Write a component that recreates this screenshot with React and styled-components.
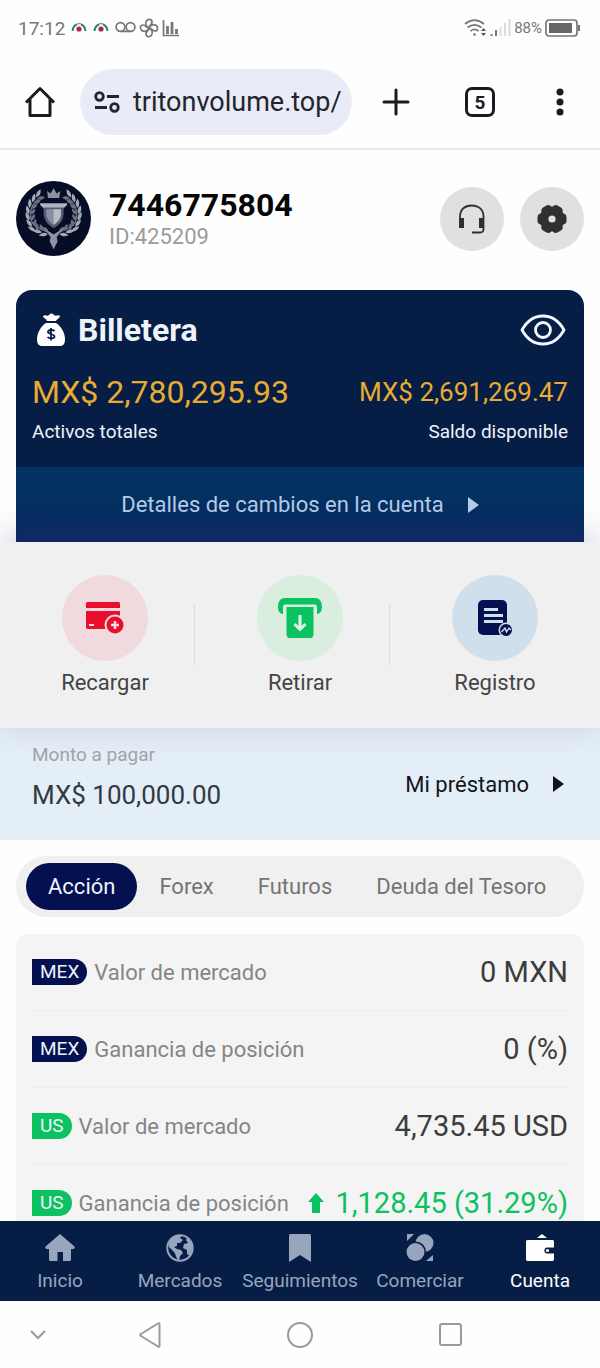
import React, { useState } from "react";
import styled, { createGlobalStyle } from "styled-components";

const GlobalStyle = createGlobalStyle`
  * {
    box-sizing: border-box;
  }
  body {
    margin: 0;
    background: #fefefe;
    font-family: Roboto, "Liberation Sans", sans-serif;
    color: #333;
  }
  button, input {
    margin: 0;
    padding: 0;
    border: none;
    background: none;
    font: inherit;
    color: inherit;
  }
  button {
    cursor: pointer;
  }
  a {
    color: inherit;
    text-decoration: none;
  }
  svg {
    display: block;
    flex-shrink: 0;
  }
`;

const laurel = [
  [12, 56, 40], [9, 50, 20], [7, 43, 5], [7, 36, -5], [9, 29, -18],
  [13, 23, -32], [18, 18, -45], [18, 58, 60], [24, 61, 80],
];

const Emblem = () => (
  <svg width="75" height="75" viewBox="0 0 75 75" aria-hidden="true">
    <circle cx="37.5" cy="37.5" r="37.5" fill="#060d27" />
    <g transform="translate(5 3) scale(.87)">
      {[false, true].map((flip) => (
        <g key={String(flip)} transform={flip ? "translate(75 0) scale(-1 1)" : undefined}>
          <path d="M20 17C8 27 8 44 19 50C26 54 32 54 37 59" fill="none" stroke="#6c7386" strokeWidth="1.500" />
          {laurel.map(([x, y, angle]) => (
            <g key={angle} transform={`translate(${x + 3} ${y - 5}) rotate(${angle * -1})`}>
              <path d="M-1 4C-5 1 -5 -3 -4 -6C0 -3 1 0 -1 4Z" fill="#a4a8b5" />
              <path d="M1 4C1 0 3 -2 6 -3C7 0 5 4 1 4Z" fill="#6a7185" />
            </g>
          ))}
        </g>
      ))}
      <path d="M31 16L30 8L34 11L37.500 5L41 11L45 8L44 16Z" fill="#8d92a1" />
      <path d="M22 22H53V24L49 28H26L22 24Z" fill="#aeb2bd" />
      <path d="M26 27H49V33C49 42 44 47 37.500 51C31 47 26 42 26 33Z" fill="#555c70" />
      <path d="M29 29H46V34C46 40 42 44 37.500 47C33 44 29 40 29 34Z" fill="#8a8f9d" />
      <path d="M37.500 29H46V34C46 40 42 44 37.500 47Z" fill="#b9bcc6" />
      <path d="M26 51L37.500 58L49 51L41 61L42 66L37.500 75L33 66L34 61Z" fill="#8d93a5" />
    </g>
  </svg>
);

const NotifyIcon = () => (
  <svg width="16" height="12" viewBox="0 0 16 12" fill="none" aria-hidden="true">
    <path d="M1.500 9C2 5 4 3 6 2.500" stroke="#2d8068" strokeWidth="2" />
    <path d="M6 2C7.500 1.500 9 1.500 10 2" stroke="#999" strokeWidth="1.500" />
    <path d="M10 2.500C12 3 14 5 14.500 9" stroke="#2d8068" strokeWidth="2" />
    <circle cx="8" cy="7" r="2.600" fill="#a52a4c" />
  </svg>
);

const VoicemailIcon = () => (
  <svg width="21" height="14" viewBox="0 0 21 14" fill="none" stroke="#777" strokeWidth="1.700" aria-hidden="true">
    <circle cx="5.500" cy="6" r="4.400" />
    <circle cx="15.500" cy="6" r="4.400" />
    <path d="M5.500 10.400H15.500" />
  </svg>
);

const FanIcon = () => (
  <svg width="20" height="20" viewBox="0 0 20 20" fill="none" stroke="#777" strokeWidth="1.700" aria-hidden="true">
    {[0, 90, 180, 270].map((angle) => (
      <path key={angle} transform={`rotate(${angle} 10 10)`} d="M10 10C6.500 8.500 6 5 7.500 2.800C9 .6 13 1 13 4C13 6.500 10.500 7 10 10Z" />
    ))}
  </svg>
);

const ChartIcon = () => (
  <svg width="18" height="18" viewBox="0 0 18 18" fill="none" stroke="#777" aria-hidden="true">
    <path d="M1.500 1V16.500H17" strokeWidth="1.700" />
    <path d="M5.500 7V15M10 3V15M14.500 10V15" strokeWidth="2.800" />
  </svg>
);

const WifiIcon = () => (
  <svg width="23" height="18" viewBox="0 0 23 18" fill="none" stroke="#777" strokeWidth="1.700" aria-hidden="true">
    <path d="M1 5C7 0 14 0 20 5M3.500 8.500C8 5 13 5 17.500 8.500M6.500 12C9 10 12 10 14.500 12" />
    <circle cx="10.500" cy="15.500" r="1.300" fill="#777" stroke="none" />
    <path d="M19.500 9L22 12H17ZM19.500 17L22 14H17Z" fill="#555" stroke="none" />
  </svg>
);

const SignalIcon = () => (
  <svg width="21" height="18" viewBox="0 0 21 18" fill="none" strokeWidth="2" aria-hidden="true">
    <path d="M1.500 15V17M6 11V17" stroke="#777" />
    <path d="M10.500 8V17M15 4V17M19.500 0V17" stroke="#dcdcdc" />
  </svg>
);

const BatteryIcon = () => (
  <svg width="35" height="18" viewBox="0 0 35 18" aria-hidden="true">
    <rect x="1" y="1" width="31" height="16" rx="3" fill="none" stroke="#777" strokeWidth="1.700" />
    <rect x="4" y="4" width="23" height="10" fill="#666" />
    <path d="M33 6H35V12H33Z" fill="#777" />
  </svg>
);

const BrowserHomeIcon = () => (
  <svg width="32" height="32" viewBox="0 0 32 32" fill="none" stroke="#1c1c1e" strokeWidth="3" aria-hidden="true">
    <path d="M2 16.500L16 2.500L30 16.500M6 13.500V29.500H26V13.500" strokeLinejoin="round" />
  </svg>
);

const TuneIcon = () => (
  <svg width="26" height="24" viewBox="0 0 26 24" fill="none" stroke="#23252e" strokeWidth="2.800" aria-hidden="true">
    <circle cx="5.500" cy="6.500" r="3.800" />
    <path d="M13 6.500H25M1 17.500H13" />
    <circle cx="20.500" cy="17.500" r="3.800" />
  </svg>
);

const PlusIcon = () => (
  <svg width="28" height="28" viewBox="0 0 28 28" fill="none" stroke="#1c1c1e" strokeWidth="3" strokeLinecap="round" aria-hidden="true">
    <path d="M14 2V26M2 14H26" />
  </svg>
);

const DotsIcon = () => (
  <svg width="8" height="28" viewBox="0 0 8 28" fill="#1c1c1e" aria-hidden="true">
    <circle cx="4" cy="4" r="3.500" />
    <circle cx="4" cy="14" r="3.500" />
    <circle cx="4" cy="24" r="3.500" />
  </svg>
);

const HeadsetIcon = () => (
  <svg width="28" height="32" viewBox="0 0 28 32" fill="none" stroke="#303030" strokeWidth="1.800" aria-hidden="true">
    <path d="M2 16V14C2 6 7 2.500 13.500 2.500C20 2.500 25.500 6 25.500 14V26C25.500 28.500 24.500 29.500 22 29.500H14" />
    <path d="M1 15H6V25H1ZM21 15H26V25H21Z" fill="#303030" stroke="none" />
  </svg>
);

const GearIcon = () => (
  <svg width="30" height="30" viewBox="0 0 30 30" fill="#303030" aria-hidden="true">
    <circle cx="15" cy="15" r="12.600" />
    {[0, 60, 120, 180, 240, 300].map((angle) => (
      <rect key={angle} x="19" y="9.500" width="10.500" height="11" rx="4" transform={`rotate(${angle} 15 15)`} />
    ))}
    <circle cx="15" cy="15" r="3.600" fill="#e0e0e0" />
  </svg>
);

const MoneyBagIcon = () => (
  <svg width="30" height="34" viewBox="0 0 30 34" fill="#fff" aria-hidden="true">
    <path d="M7 3C9 1 11 4 13 2C15 0 16 0 18 2C20 4 22 1 24 3C24 5 21 6 20 8H11C10 5 7 5 7 3Z" />
    <path d="M10 10H20C25 13 29 20 29 26C29 31 27 33 24 33H6C3 33 1 31 1 26C1 20 5 13 10 10Z" />
    <path d="M18.500 18C17 16.500 12 16.500 12 19C12 21.500 18.500 20.500 18.500 23.500C18.500 26 13 26 11.500 24M15 15V27.500" fill="none" stroke="#061e45" strokeWidth="1.800" />
  </svg>
);

const EyeIcon = () => (
  <svg width="46" height="32" viewBox="0 0 46 32" fill="none" stroke="#f2f8ff" strokeWidth="2.800" aria-hidden="true">
    <path d="M2 16C7 7 14 2 23 2C32 2 39 7 44 16C39 25 32 30 23 30C14 30 7 25 2 16Z" strokeLinejoin="round" />
    <circle cx="23" cy="16" r="7.500" />
  </svg>
);

const CaretIcon = () => (
  <svg width="11" height="16" viewBox="0 0 11 16" fill="currentColor" aria-hidden="true">
    <path d="M0 0L11 8L0 16Z" />
  </svg>
);

const RechargeIcon = () => (
  <svg width="40" height="34" viewBox="0 0 40 34" aria-hidden="true">
    <path d="M3 1H33C34.500 1 35 1.500 35 3V7H1V3C1 1.500 1.500 1 3 1ZM1 10H35V28H3C1.500 28 1 27.500 1 26Z" fill="#e90f2c" />
    <path d="M4 24H9" stroke="#f8dde0" strokeWidth="2" />
    <circle cx="30" cy="24" r="10.500" fill="#f0dadd" />
    <circle cx="30" cy="24" r="8.500" fill="#e90f2c" />
    <path d="M30 20V28M26 24H34" stroke="#f8dde0" strokeWidth="2.600" />
  </svg>
);

const WithdrawIcon = () => (
  <svg width="44" height="40" viewBox="0 0 44 40" aria-hidden="true">
    <path d="M7 0H37C42 0 44 4 44 9C44 13 42 16 39 16V9C39 7 38 6.500 36 6.500H8C6 6.500 5 7 5 9V16C2 16 0 13 0 9C0 4 2 0 7 0Z" fill="#0ac25f" />
    <path d="M8.500 9H35.500V36C35.500 38.500 34.500 40 32 40H12C9.500 40 8.500 38.500 8.500 36Z" fill="#0ac25f" />
    <path d="M22 17V31M16.500 26L22 31.500L27.500 26" fill="none" stroke="#dff5e7" strokeWidth="3" />
  </svg>
);

const RecordIcon = () => (
  <svg width="36" height="38" viewBox="0 0 36 38" aria-hidden="true">
    <rect x="1" y="1" width="29" height="35" rx="5" fill="#04104f" />
    <path d="M7 10.500H21M7 16.500H26M7 22.500H26" stroke="#cfdfeb" strokeWidth="2.800" />
    <circle cx="29" cy="31" r="7.500" fill="#cfdfeb" />
    <circle cx="29" cy="31" r="6" fill="#04104f" />
    <path d="M24.500 33L28 29L29.500 33L32 29L34 31" fill="none" stroke="#cfdfeb" strokeWidth="1.400" />
  </svg>
);

const ArrowUpIcon = () => (
  <svg width="16" height="20" viewBox="0 0 16 20" fill="currentColor" aria-hidden="true">
    <path d="M8 0L16 9H12V20H4V9H0Z" />
  </svg>
);

const HomeIcon = () => (
  <svg width="30" height="28" viewBox="0 0 30 28" fill="currentColor" aria-hidden="true">
    <path d="M15 0L30 13L29 15H26V25C26 26.500 25.500 27 24 27H18V18H12.500V27H6C4.500 27 4 26.500 4 25V15H1L0 13Z" />
  </svg>
);

const GlobeIcon = () => (
  <svg width="28" height="28" viewBox="0 0 28 28" aria-hidden="true">
    <circle cx="14" cy="14" r="12.700" fill="none" stroke="currentColor" strokeWidth="2" />
    <path d="M6 4C9 1 13 0 16 1L14 4L17 6L14 9L11 9V12L8 13L11 15L15 16L17 19L14 22L13 27C10 25 10 20 8 18L3 13C2 10 4 7 6 4ZM21 4C25 7 27 11 26 16L24 22L21 20V16L17 14L18 10L22 9L20 6Z" fill="currentColor" />
  </svg>
);

const BookmarkIcon = () => (
  <svg width="24" height="28" viewBox="0 0 24 28" fill="currentColor" aria-hidden="true">
    <path d="M3 0H21C22.500 0 23 .5 23 2V28L12 21L1 28V2C1 .5 1.500 0 3 0Z" />
  </svg>
);

const TradeIcon = () => (
  <svg width="28" height="28" viewBox="0 0 28 28" fill="currentColor" aria-hidden="true">
    <circle cx="18.500" cy="9" r="9" />
    <circle cx="9.500" cy="18" r="10.500" fill="#061e45" />
    <circle cx="9.500" cy="18" r="9" />
    <path d="M1 0H8L1 7ZM27 21V27H20Z" />
  </svg>
);

const WalletIcon = () => (
  <svg width="30" height="28" viewBox="0 0 30 28" aria-hidden="true">
    <path d="M12 4L17 0L22 4Z" fill="currentColor" />
    <path d="M3 6H27C28.500 6 29 6.500 29 8V13.500H22C18.500 13.500 18.500 19.500 22 19.500H29V25C29 26.500 28.500 27 27 27H3C1.500 27 1 26.500 1 25V8C1 6.500 1.500 6 3 6Z" fill="currentColor" />
    <circle cx="22.500" cy="16.500" r="1.600" fill="currentColor" />
  </svg>
);

const actions = [
  { label: "Recargar", tint: "#f0dadd", icon: <RechargeIcon /> },
  { label: "Retirar", tint: "#daeee0", icon: <WithdrawIcon /> },
  { label: "Registro", tint: "#cfdfeb", icon: <RecordIcon /> },
];

const tabs = ["Acción", "Forex", "Futuros", "Deuda del Tesoro"];

const positions = [
  { market: "MEX", label: "Valor de mercado", value: "0 MXN" },
  { market: "MEX", label: "Ganancia de posición", value: "0 (%)" },
  { market: "US", label: "Valor de mercado", value: "4,735.45 USD" },
  { market: "US", label: "Ganancia de posición", value: "1,128.45 (31.29%)", up: true },
];

const navItems = [
  { label: "Inicio", icon: <HomeIcon /> },
  { label: "Mercados", icon: <GlobeIcon /> },
  { label: "Seguimientos", icon: <BookmarkIcon /> },
  { label: "Comerciar", icon: <TradeIcon /> },
  { label: "Cuenta", icon: <WalletIcon />, active: true },
];

const App = () => {
  const [activeTab, setActiveTab] = useState("Acción");

  return (
    <Screen>
      <GlobalStyle />
      <StatusBar>
        <StatusGroup>
          <Clock>17:12</Clock>
          <NotifyIcon />
          <NotifyIcon />
          <StatusGroup $tight>
            <VoicemailIcon />
            <FanIcon />
            <ChartIcon />
          </StatusGroup>
        </StatusGroup>
        <StatusGroup $tight>
          <WifiIcon />
          <SignalIcon />
          <Battery>88%</Battery>
          <BatteryIcon />
        </StatusGroup>
      </StatusBar>

      <BrowserBar>
        <BarButton aria-label="Página principal">
          <BrowserHomeIcon />
        </BarButton>
        <AddressBox>
          <TuneIcon />
          <input aria-label="Dirección" defaultValue="tritonvolume.top/" />
        </AddressBox>
        <BarButton aria-label="Nueva pestaña">
          <PlusIcon />
        </BarButton>
        <BarButton aria-label="Pestañas">
          <TabCount>5</TabCount>
        </BarButton>
        <BarButton aria-label="Menú">
          <DotsIcon />
        </BarButton>
      </BrowserBar>

      <Main>
        <Profile>
          <Emblem />
          <ProfileText>
            <h1>7446775804</h1>
            <p>ID:425209</p>
          </ProfileText>
          <RoundButton aria-label="Soporte">
            <HeadsetIcon />
          </RoundButton>
          <RoundButton aria-label="Ajustes">
            <GearIcon />
          </RoundButton>
        </Profile>

        <Wallet>
          <WalletHead>
            <MoneyBagIcon />
            <h2>Billetera</h2>
            <button aria-label="Mostrar saldo">
              <EyeIcon />
            </button>
          </WalletHead>
          <Balances>
            <Balance>
              <Amount $large>MX$ 2,780,295.93</Amount>
              <p>Activos totales</p>
            </Balance>
            <Balance $end>
              <Amount>MX$ 2,691,269.47</Amount>
              <p>Saldo disponible</p>
            </Balance>
          </Balances>
          <DetailsLink href="#detalles">
            Detalles de cambios en la cuenta
            <CaretIcon />
          </DetailsLink>
        </Wallet>

        <Actions>
          {actions.map(({ label, tint, icon }, i) => (
            <React.Fragment key={label}>
              {i > 0 && <Divider />}
              <Action>
                <ActionIcon $tint={tint}>{icon}</ActionIcon>
                {label}
              </Action>
            </React.Fragment>
          ))}
        </Actions>

        <Loan>
          <LoanAmount>
            <span>Monto a pagar</span>
            <strong>MX$ 100,000.00</strong>
          </LoanAmount>
          <LoanLink href="#prestamo">
            Mi préstamo
            <CaretIcon />
          </LoanLink>
        </Loan>

        <Tabs role="tablist">
          {tabs.map((tab) => (
            <Tab
              key={tab}
              role="tab"
              aria-selected={tab === activeTab}
              $active={tab === activeTab}
              onClick={() => setActiveTab(tab)}
            >
              {tab}
            </Tab>
          ))}
        </Tabs>

        <Positions>
          {positions.map(({ market, label, value, up }) => (
            <Position key={market + label}>
              <Badge $market={market}>{market}</Badge>
              <PositionLabel>{label}</PositionLabel>
              <PositionValue $up={up}>
                {up && <ArrowUpIcon />}
                {value}
              </PositionValue>
            </Position>
          ))}
        </Positions>
      </Main>

      <BottomNav>
        {navItems.map(({ label, icon, active }) => (
          <NavLink key={label} href={`#${label.toLowerCase()}`} $active={active}>
            {icon}
            {label}
          </NavLink>
        ))}
      </BottomNav>

      <SystemBar>
        <button aria-label="Ocultar">
          <svg width="16" height="10" viewBox="0 0 16 10" aria-hidden="true">
            <path d="M1 1L8 8L15 1" />
          </svg>
        </button>
        <button aria-label="Atrás">
          <svg width="24" height="28" viewBox="0 0 24 28" aria-hidden="true">
            <path d="M21.500 3V25C21.500 26 20.500 26 20 25.500L3 15C2 14.500 2 13.500 3 13L20 2.500C20.500 2 21.500 2 21.500 3Z" />
          </svg>
        </button>
        <button aria-label="Inicio">
          <svg width="26" height="26" viewBox="0 0 26 26" aria-hidden="true">
            <circle cx="13" cy="13" r="12" />
          </svg>
        </button>
        <button aria-label="Recientes">
          <svg width="24" height="24" viewBox="0 0 24 24" aria-hidden="true">
            <rect x="2" y="1" width="21" height="21" rx="2" />
          </svg>
        </button>
      </SystemBar>
    </Screen>
  );
};

const Screen = styled.div`
  display: flex;
  flex-direction: column;
  height: 100vh;
`;

const StatusBar = styled.div`
  display: flex;
  align-items: center;
  justify-content: space-between;
  flex-shrink: 0;
  height: 56px;
  padding: 0 20px 0 18px;
  color: #777;
`;

const StatusGroup = styled.div`
  display: flex;
  align-items: center;
  gap: ${({ $tight }) => ($tight ? "3px" : "6px")};
`;

const Clock = styled.span`
  font-size: 19px;
`;

const Battery = styled.span`
  font-size: 15px;
`;

const BrowserBar = styled.header`
  display: grid;
  grid-template-columns: 80px 1fr 88px 80px 80px;
  align-items: center;
  flex-shrink: 0;
  height: 94px;
  border-bottom: 2px solid #e8e8ea;
`;

const BarButton = styled.button`
  display: flex;
  align-items: center;
  justify-content: center;
  height: 64px;
`;

const AddressBox = styled.label`
  display: flex;
  align-items: center;
  gap: 13px;
  min-width: 0;
  height: 66px;
  padding: 0 8px 0 14px;
  border-radius: 33px;
  background: #e9ebf7;
  color: #23252e;

  input {
    flex: 1;
    min-width: 0;
    font-size: 27px;
    line-height: 32px;
    outline: none;
  }
`;

const TabCount = styled.span`
  display: flex;
  align-items: center;
  justify-content: center;
  width: 30px;
  height: 30px;
  border: 3px solid #1c1c1e;
  border-radius: 7px;
  color: #1c1c1e;
  font-size: 19px;
  font-weight: 700;
`;

const Main = styled.main`
  flex: 1;
  min-height: 0;
  overflow-y: auto;
  scrollbar-width: none;
`;

const Profile = styled.section`
  display: flex;
  align-items: center;
  gap: 16px;
  padding: 31px 16px 34px;
`;

const ProfileText = styled.div`
  flex: 1;
  padding-left: 2px;

  h1 {
    margin: 0;
    color: #060606;
    font-size: 32px;
    font-weight: 700;
    line-height: 36px;
  }
  p {
    margin: 0;
    color: #9b9b9b;
    font-size: 22px;
    line-height: 28px;
  }
`;

const RoundButton = styled.button`
  display: flex;
  align-items: center;
  justify-content: center;
  width: 64px;
  height: 64px;
  border-radius: 50%;
  background: #e0e0e0;
`;

const Wallet = styled.section`
  margin: 0 16px;
  padding-top: 20px;
  border-radius: 16px 16px 0 0;
  background: #061e45;
  color: #eef3fa;
  overflow: hidden;
`;

const WalletHead = styled.div`
  display: flex;
  align-items: center;
  gap: 12px;
  height: 40px;
  padding: 0 18px 0 20px;

  h2 {
    flex: 1;
    margin: 0;
    font-size: 32px;
    line-height: 40px;
  }
`;

const Balances = styled.div`
  display: flex;
  justify-content: space-between;
  padding: 22px 16px 23px;
`;

const Balance = styled.div`
  text-align: ${({ $end }) => ($end ? "right" : "left")};

  p {
    margin: 8px 0 0;
    font-size: 19px;
    line-height: 24px;
  }
`;

const Amount = styled.div`
  color: #e9ab32;
  font-size: ${({ $large }) => ($large ? "32px" : "26px")};
  line-height: 40px;
`;

const DetailsLink = styled.a`
  display: flex;
  align-items: center;
  justify-content: center;
  gap: 24px;
  height: 75px;
  background: linear-gradient(#033262 30%, #0a2961);
  color: #b4cce6;
  font-size: 22px;
`;

const Actions = styled.section`
  position: relative;
  display: grid;
  grid-template-columns: 1fr 1px 1fr 1px 1fr;
  align-items: center;
  padding-right: 16px;
  background: #f0f0f0;
  box-shadow: 0 -6px 32px rgba(70, 50, 110, 0.22);
`;

const Action = styled.button`
  display: flex;
  flex-direction: column;
  align-items: center;
  gap: 8px;
  padding: 33px 0 31px 16px;
  color: #444;
  font-size: 22px;
  line-height: 28px;
`;

const ActionIcon = styled.span`
  display: flex;
  align-items: center;
  justify-content: center;
  width: 86px;
  height: 86px;
  border-radius: 50%;
  background: ${({ $tint }) => $tint};
`;

const Divider = styled.div`
  height: 62px;
  background: #dcdcdc;
`;

const Loan = styled.section`
  display: flex;
  align-items: center;
  justify-content: space-between;
  padding: 15px 32px 29px;
  background: #e4eef7;
`;

const LoanAmount = styled.div`
  display: flex;
  flex-direction: column;
  gap: 12px;

  span {
    color: #a0a4a9;
    font-size: 19px;
    line-height: 24px;
  }
  strong {
    color: #333a42;
    font-size: 26px;
    font-weight: 400;
    line-height: 32px;
  }
`;

const LoanLink = styled.a`
  display: flex;
  align-items: center;
  gap: 24px;
  padding: 14px 4px 0 0;
  color: #10151b;
  font-size: 22px;
`;

const Tabs = styled.div`
  display: flex;
  margin: 16px 16px 0;
  padding: 7px 10px;
  border-radius: 31px;
  background: #f0f0f0;
`;

const Tab = styled.button`
  height: 47px;
  padding: 0 22px;
  border-radius: 24px;
  background: ${({ $active }) => ($active ? "#04104f" : "transparent")};
  color: ${({ $active }) => ($active ? "#eef3fa" : "#747474")};
  font-size: 22px;
  white-space: nowrap;
`;

const Positions = styled.section`
  margin: 17px 16px 0;
  padding: 0 16px;
  border-radius: 12px;
  background: #f4f4f4;
`;

const Position = styled.div`
  display: flex;
  align-items: center;
  gap: 7px;
  height: 77px;
  border-bottom: 1px solid #eeeeee;
`;

const Badge = styled.span`
  padding: 0 8px;
  border-radius: 0 13px 13px 0;
  background: ${({ $market }) => ($market === "MEX" ? "#04104f" : "#0ac25f")};
  color: #eef3fa;
  font-size: 19px;
  line-height: 26px;
`;

const PositionLabel = styled.span`
  flex: 1;
  color: #858585;
  font-size: 22px;
  white-space: nowrap;
`;

const PositionValue = styled.span`
  display: flex;
  align-items: center;
  gap: 12px;
  color: ${({ $up }) => ($up ? "#0ac25f" : "#3c3c3c")};
  font-size: 29px;
  line-height: 36px;
  white-space: nowrap;
`;

const BottomNav = styled.nav`
  display: grid;
  grid-template-columns: repeat(5, 1fr);
  flex-shrink: 0;
  height: 80px;
  background: #061e45;
`;

const NavLink = styled.a`
  display: flex;
  flex-direction: column;
  align-items: center;
  gap: 7px;
  padding-top: 13px;
  color: ${({ $active }) => ($active ? "#ffffff" : "#97a5bd")};
  font-size: 19px;
  line-height: 24px;
`;

const SystemBar = styled.div`
  display: grid;
  grid-template-columns: 1fr 2fr 2fr 2fr 1fr;
  flex-shrink: 0;
  height: 67px;

  button {
    display: flex;
    align-items: center;
    justify-content: center;
  }
  svg {
    fill: none;
    stroke: #9a9a9a;
    stroke-width: 2;
  }
`;

export default App;
